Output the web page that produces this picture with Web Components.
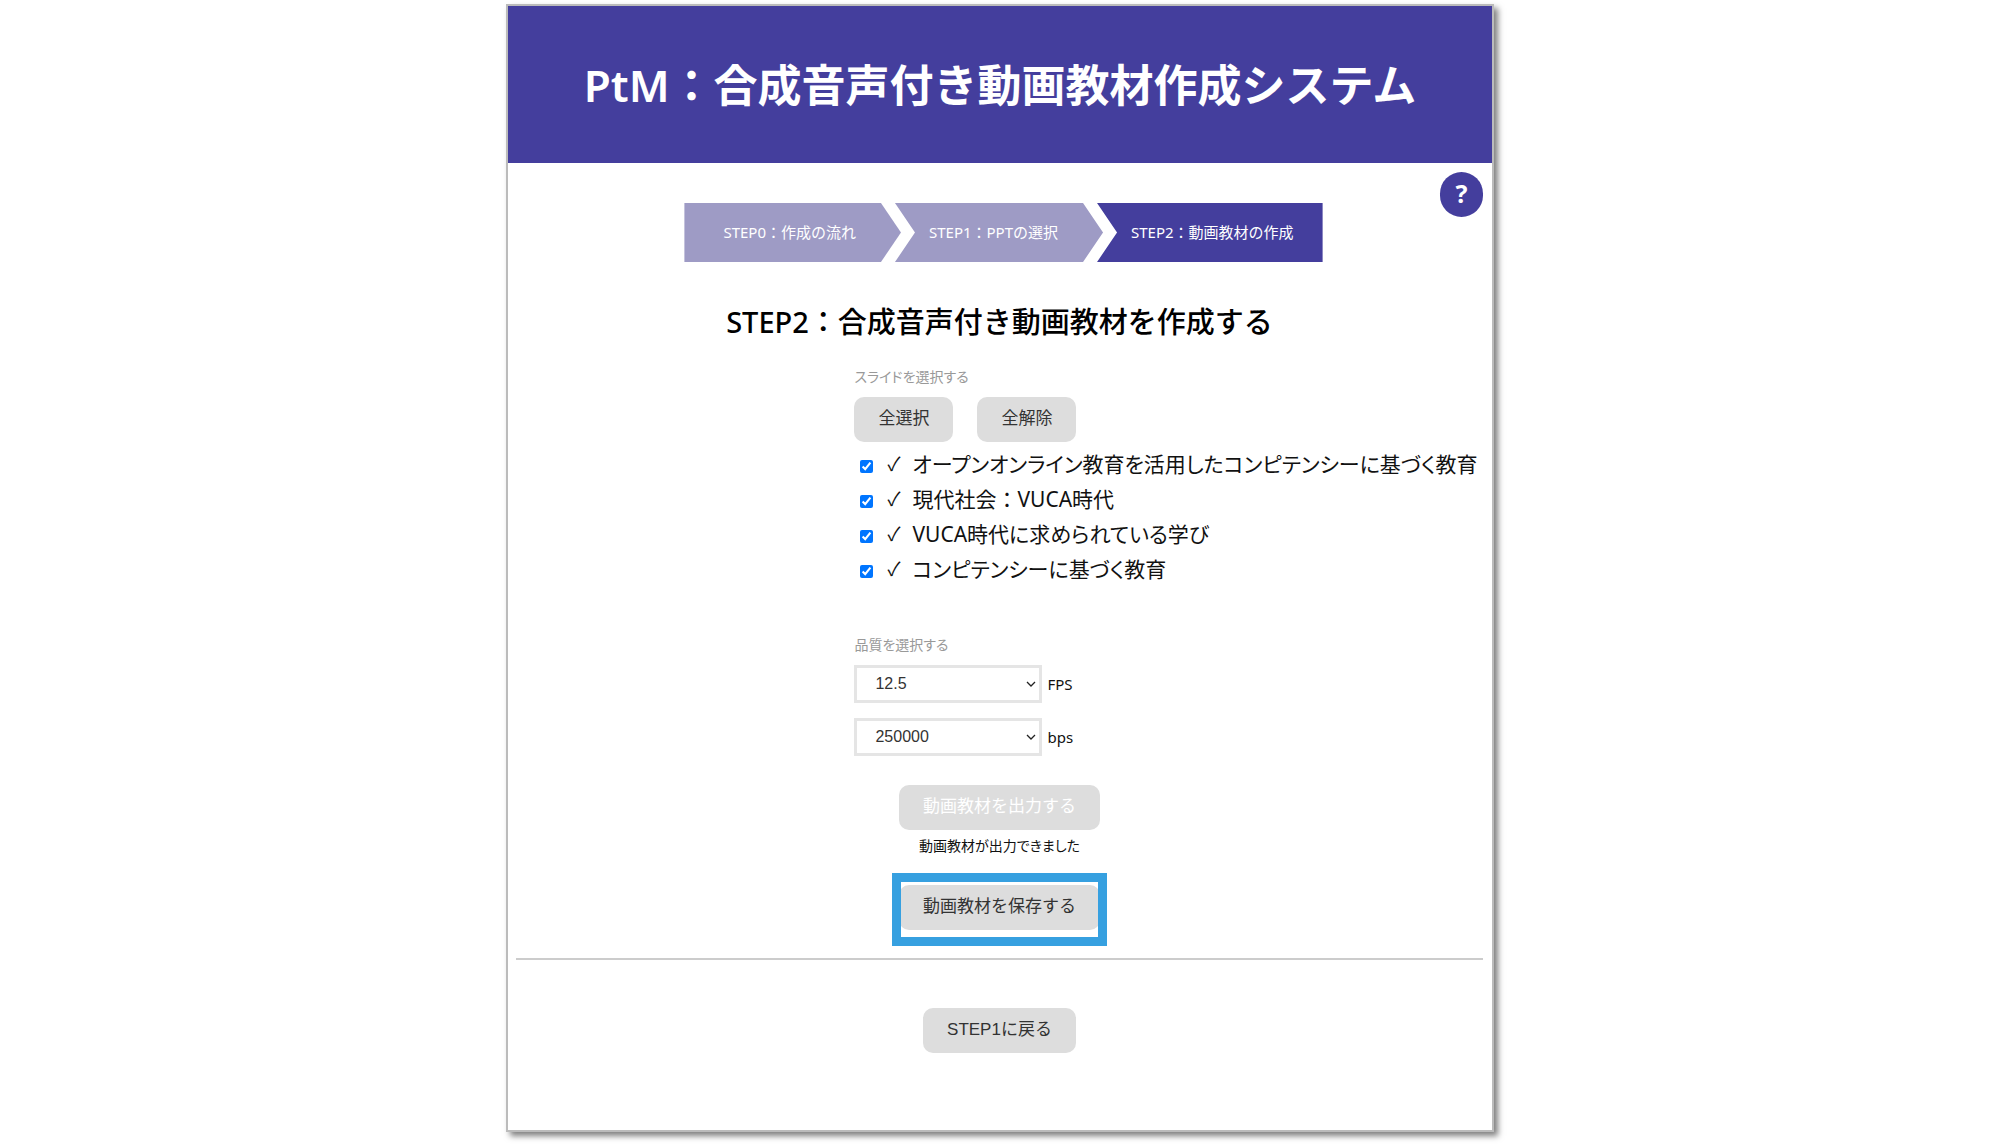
<!DOCTYPE html>
<html lang="ja">
<head>
<meta charset="utf-8">
<meta name="viewport" content="width=device-width, initial-scale=1">
<title>PtM</title>
<style>
  :root {
    --brand: #443e9d;
    --brand-muted: #9e9bc5;
    --ui: "Noto Sans", "Noto Sans CJK JP", sans-serif;
    --control: "Liberation Sans", "Noto Sans CJK JP", sans-serif;
  }
  body { margin: 0; padding: 4px 16px 12px; background: #fff; color: #111; font: 15px/20px var(--ui); }
</style>
</head>
<body>
<ptm-app></ptm-app>
<script>
  const define = (name, html, setup) => {
    const template = document.createElement('template');
    template.innerHTML = '<style>:host,*,*::before{box-sizing:border-box}</style>' + html;
    customElements.define(name, class extends HTMLElement {
      constructor() {
        super();
        this.attachShadow({ mode: 'open' }).append(template.content.cloneNode(true));
      }
      connectedCallback() { if (setup) setup(this, this.shadowRoot); }
    });
  };

  define('ptm-header', `
    <style>
      :host { display: block; background: var(--brand); color: #fff; }
      h1 { margin: 0; padding: 48px 16px 47px; font-size: 44px; line-height: 62px; font-weight: 600; text-align: center; }
    </style>
    <h1><slot></slot></h1>`);

  define('ptm-step', `
    <style>
      :host { display: block; }
      a { display: block; height: 59px; padding: 0 45px 0 34px; line-height: 59px; font-size: 15px; color: #fff; text-decoration: none; white-space: nowrap; background: var(--brand-muted);
          clip-path: polygon(0 0, calc(100% - 20px) 0, 100% 50%, calc(100% - 20px) 100%, 0 100%, 20px 50%); }
      :host([first]) a { padding-left: 39px; clip-path: polygon(0 0, calc(100% - 20px) 0, 100% 50%, calc(100% - 20px) 100%, 0 100%); }
      :host([current]) a { padding-right: 29px; background: var(--brand); clip-path: polygon(0 0, 100% 0, 100% 100%, 0 100%, 20px 50%); }
      :host(:not([first])) { margin-left: -6px; }
    </style>
    <a href="#"><slot></slot></a>`);

  define('ptm-steps', `
    <style>
      :host { display: block; }
      nav { display: flex; padding-left: 8px; }
    </style>
    <nav><slot></slot></nav>`);

  define('ptm-help', `
    <style>
      :host { display: block; }
      button { display: block; width: 43px; height: 45px; border: 0; padding: 0 0 4px; border-radius: 22px; background: var(--brand); color: #fff; font: 700 25px/40px var(--ui); }
    </style>
    <button type="button"><slot></slot></button>`);

  define('ptm-button', `
    <style>
      :host { display: inline-block; }
      button { display: block; height: 45px; padding: 0 24px 2px; border: 0; border-radius: 10px; background: #ddd; color: #333; font: 17px/43px var(--control); white-space: nowrap; }
      button:disabled { color: #fff; }
    </style>
    <button type="button"><slot></slot></button>`,
    (host, root) => { root.querySelector('button').disabled = host.hasAttribute('disabled'); });

  define('ptm-highlight', `
    <style>
      :host { display: block; position: relative; padding: 12px 7px 16px; }
      :host::after { content: ""; position: absolute; inset: 0; border: 9px solid #36a0e0; pointer-events: none; }
    </style>
    <slot></slot>`);

  define('ptm-slide', `
    <style>
      :host { display: block; }
      label { display: flex; align-items: center; height: 35px; color: #111; font-size: 21px; line-height: 35px; white-space: nowrap; font-feature-settings: "palt"; }
      :host([full-width]) label { font-feature-settings: normal; }
      input { flex: none; width: 13px; height: 13px; margin: 3px 14px 0 6px; accent-color: #0075ff; }
      .mark { flex: none; width: 25px; font-size: 19px; }
    </style>
    <label><input type="checkbox" checked><span class="mark">✓</span><span><slot></slot></span></label>`);

  define('ptm-select', `
    <style>
      :host { display: block; }
      label { display: flex; align-items: center; gap: 5px; font-size: 15px; line-height: 20px; }
      .box { display: grid; align-items: center; width: 188px; }
      select { grid-area: 1 / 1; appearance: none; width: 100%; height: 38px; margin: 0; padding: 0 32px 0 18px; border: 3px solid #e5e5e5; border-radius: 0; background: #fff; color: #333; font: 16px/20px var(--control); }
      svg { grid-area: 1 / 1; justify-self: end; margin-right: 6px; pointer-events: none; }
    </style>
    <label><span class="box"><select></select>
      <svg width="10" height="6" viewBox="0 0 10 6" fill="none" stroke="#222" stroke-width="1.3"><path d="M1 1l4 4 4-4"/></svg></span><slot></slot></label>`,
    (host, root) => { root.querySelector('select').replaceChildren(new Option(host.getAttribute('value'))); });

  define('ptm-app', `
    <style>
      :host { display: block; max-width: 988px; margin: 0 auto; border: 2px solid #bbb; box-shadow: 4px 4px 6px rgba(0,0,0,.5); background: #fff; }
      main { padding: 9px 9px 77px 8px; }
      .top { display: grid; grid-template-columns: 1fr auto 1fr; align-items: start; }
      ptm-steps { grid-column: 2; padding-top: 31px; }
      ptm-help { grid-column: 3; justify-self: end; }
      h2 { margin: 40px 0 25px; font-size: 29px; line-height: 40px; font-weight: 500; text-align: center; color: #000; }
      .form { margin-left: 35%; }
      .label { margin: 0 0 10px; color: #999; font-size: 14px; line-height: 20px; font-feature-settings: "palt"; }
      .actions { display: flex; gap: 24px; margin-bottom: 5px; }
      .slides { margin-bottom: 48px; }
      .selects { display: grid; gap: 15px; }
      .output { display: flex; flex-direction: column; align-items: center; margin-top: 29px; }
      .output p { margin: 6px 0 17px; font-size: 14px; line-height: 20px; font-feature-settings: "palt"; }
      hr { margin: 12px 0 48px; border: 0; border-top: 2px solid #ccc; }
      .back { display: flex; justify-content: center; }
    </style>
    <ptm-header>PtM：合成音声付き動画教材作成システム</ptm-header>
    <main>
      <div class="top">
        <ptm-steps>
          <ptm-step first>STEP0：作成の流れ</ptm-step>
          <ptm-step>STEP1：PPTの選択</ptm-step>
          <ptm-step current>STEP2：動画教材の作成</ptm-step>
        </ptm-steps>
        <ptm-help>?</ptm-help>
      </div>
      <h2>STEP2：合成音声付き動画教材を作成する</h2>
      <div class="form">
        <p class="label">スライドを選択する</p>
        <div class="actions"><ptm-button>全選択</ptm-button><ptm-button>全解除</ptm-button></div>
        <div class="slides">
          <ptm-slide>オープンオンライン教育を活用したコンピテンシーに基づく教育</ptm-slide>
          <ptm-slide full-width>現代社会：VUCA時代</ptm-slide>
          <ptm-slide>VUCA時代に求められている学び</ptm-slide>
          <ptm-slide>コンピテンシーに基づく教育</ptm-slide>
        </div>
        <p class="label">品質を選択する</p>
        <div class="selects">
          <ptm-select value="12.5">FPS</ptm-select>
          <ptm-select value="250000">bps</ptm-select>
        </div>
      </div>
      <div class="output">
        <ptm-button disabled>動画教材を出力する</ptm-button>
        <p>動画教材が出力できました</p>
        <ptm-highlight><ptm-button>動画教材を保存する</ptm-button></ptm-highlight>
      </div>
      <hr>
      <div class="back"><ptm-button>STEP1に戻る</ptm-button></div>
    </main>`);
</script>
</body>
</html>
